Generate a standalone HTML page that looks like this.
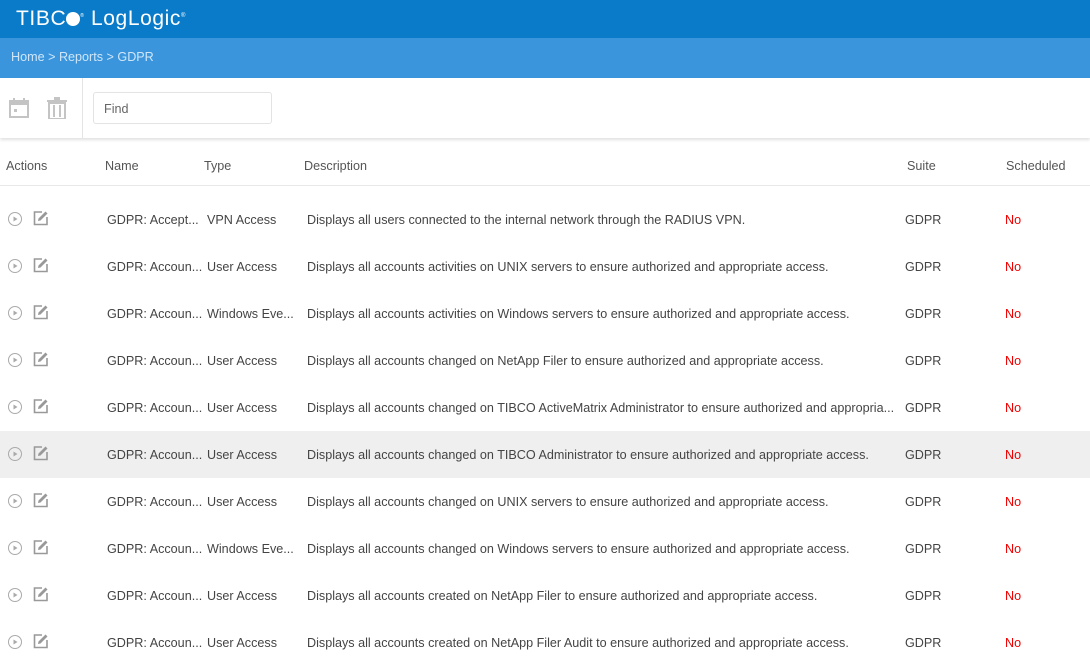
<html><head><style>
body{margin:0;width:1090px;height:666px;overflow:hidden;font-family:"Liberation Sans",sans-serif;background:#fff;position:relative;color:#333}
.top{position:absolute;left:0;top:0;width:1090px;height:38px;background:#0a7bc8}
.bc{position:absolute;left:0;top:38px;width:1090px;height:40px;background:#3a95dd;color:#cfe6f8;font-size:12.6px;line-height:38px;padding-left:11px;box-sizing:border-box}
.tb{position:absolute;left:0;top:78px;width:1090px;height:60px;background:#fff;box-shadow:0 2px 3px rgba(0,0,0,.12)}
.sep{position:absolute;left:82px;top:0;width:1px;height:60px;background:#e4e4e4}
.find{position:absolute;left:93px;top:14px;width:179px;height:32px;border:1px solid #e3e3e3;border-radius:3px;font-size:12.6px;color:#666;line-height:32px;padding-left:10px;box-sizing:border-box}
.h{position:absolute;top:159px;font-size:12.6px;color:#555}
.hl{position:absolute;left:0;top:185px;width:1090px;height:1px;background:#e8e8e8}
.r{position:absolute;left:0;width:1090px;height:47px;font-size:12.6px;color:#444}
.r span{position:absolute;top:17px;white-space:nowrap}
.no{color:#e00}
</style></head><body>
<div class="top"><div style="position:absolute;left:16px;top:7px;color:#fff;font-size:21px;letter-spacing:0.6px">TIBC<span style="display:inline-block;width:14px;height:14px;border-radius:50%;background:#fff;vertical-align:-1px"></span><sup style="font-size:5px">®</sup> LogLogic<sup style="font-size:6px">®</sup></div></div>
<div class="bc">Home &gt; Reports &gt; GDPR</div>
<div class="tb">
<svg style="position:absolute;left:9px;top:20px" width="20" height="20" viewBox="0 0 20 20"><rect x="1" y="3" width="18" height="16" fill="none" stroke="#c4c4c4" stroke-width="2"/><rect x="1" y="3" width="18" height="4" fill="#c4c4c4"/><rect x="4" y="0" width="2" height="4" fill="#c4c4c4"/><rect x="14" y="0" width="2" height="4" fill="#c4c4c4"/><rect x="5" y="11" width="3" height="3" fill="#c4c4c4"/></svg>
<svg style="position:absolute;left:47px;top:19px" width="20" height="22" viewBox="0 0 20 22"><rect x="0" y="3" width="20" height="2" fill="#c4c4c4"/><rect x="7" y="0" width="6" height="3" fill="#c4c4c4"/><rect x="2" y="6" width="16" height="16" fill="none" stroke="#c4c4c4" stroke-width="2"/><rect x="6" y="8" width="2" height="12" fill="#c4c4c4"/><rect x="12" y="8" width="2" height="12" fill="#c4c4c4"/></svg>
<div class="sep"></div>
<div class="find">Find</div>
</div>
<div class="h" style="left:6px">Actions</div><div class="h" style="left:105px">Name</div><div class="h" style="left:204px">Type</div><div class="h" style="left:304px">Description</div><div class="h" style="left:907px">Suite</div><div class="h" style="left:1006px">Scheduled</div>
<div class="hl"></div>
<div id="rows"></div>
<script>
var d=[["GDPR: Accept...","VPN Access","Displays all users connected to the internal network through the RADIUS VPN."],
["GDPR: Accoun...","User Access","Displays all accounts activities on UNIX servers to ensure authorized and appropriate access."],
["GDPR: Accoun...","Windows Eve...","Displays all accounts activities on Windows servers to ensure authorized and appropriate access."],
["GDPR: Accoun...","User Access","Displays all accounts changed on NetApp Filer to ensure authorized and appropriate access."],
["GDPR: Accoun...","User Access","Displays all accounts changed on TIBCO ActiveMatrix Administrator to ensure authorized and appropria..."],
["GDPR: Accoun...","User Access","Displays all accounts changed on TIBCO Administrator to ensure authorized and appropriate access."],
["GDPR: Accoun...","User Access","Displays all accounts changed on UNIX servers to ensure authorized and appropriate access."],
["GDPR: Accoun...","Windows Eve...","Displays all accounts changed on Windows servers to ensure authorized and appropriate access."],
["GDPR: Accoun...","User Access","Displays all accounts created on NetApp Filer to ensure authorized and appropriate access."],
["GDPR: Accoun...","User Access","Displays all accounts created on NetApp Filer Audit to ensure authorized and appropriate access."]];
var h="";d.forEach(function(r,i){var t=196+i*47;
h+='<div class="r" style="top:'+t+'px;'+(i==5?'background:#efefef':'')+'">'+
'<svg style="position:absolute;left:7px;top:15px" width="16" height="16" viewBox="0 0 16 16"><circle cx="8" cy="8" r="6.5" fill="none" stroke="#aaa"/><path d="M6.5 5.5L10.5 8L6.5 10.5Z" fill="#aaa"/></svg>'+
'<svg style="position:absolute;left:33px;top:14px" width="16" height="16" viewBox="0 0 16 16"><path d="M9 2H1.5V14.5H14V7" fill="none" stroke="#999" stroke-width="1.6"/><path d="M5 11L5.5 8.5L12.5 1.5L14.5 3.5L7.5 10.5Z" fill="#999"/></svg>'+
'<span style="left:107px">'+r[0]+'</span><span style="left:207px">'+r[1]+'</span><span style="left:307px">'+r[2]+'</span><span style="left:905px">GDPR</span><span class="no" style="left:1005px">No</span></div>';});
document.getElementById("rows").innerHTML=h;
</script>
</body></html>
